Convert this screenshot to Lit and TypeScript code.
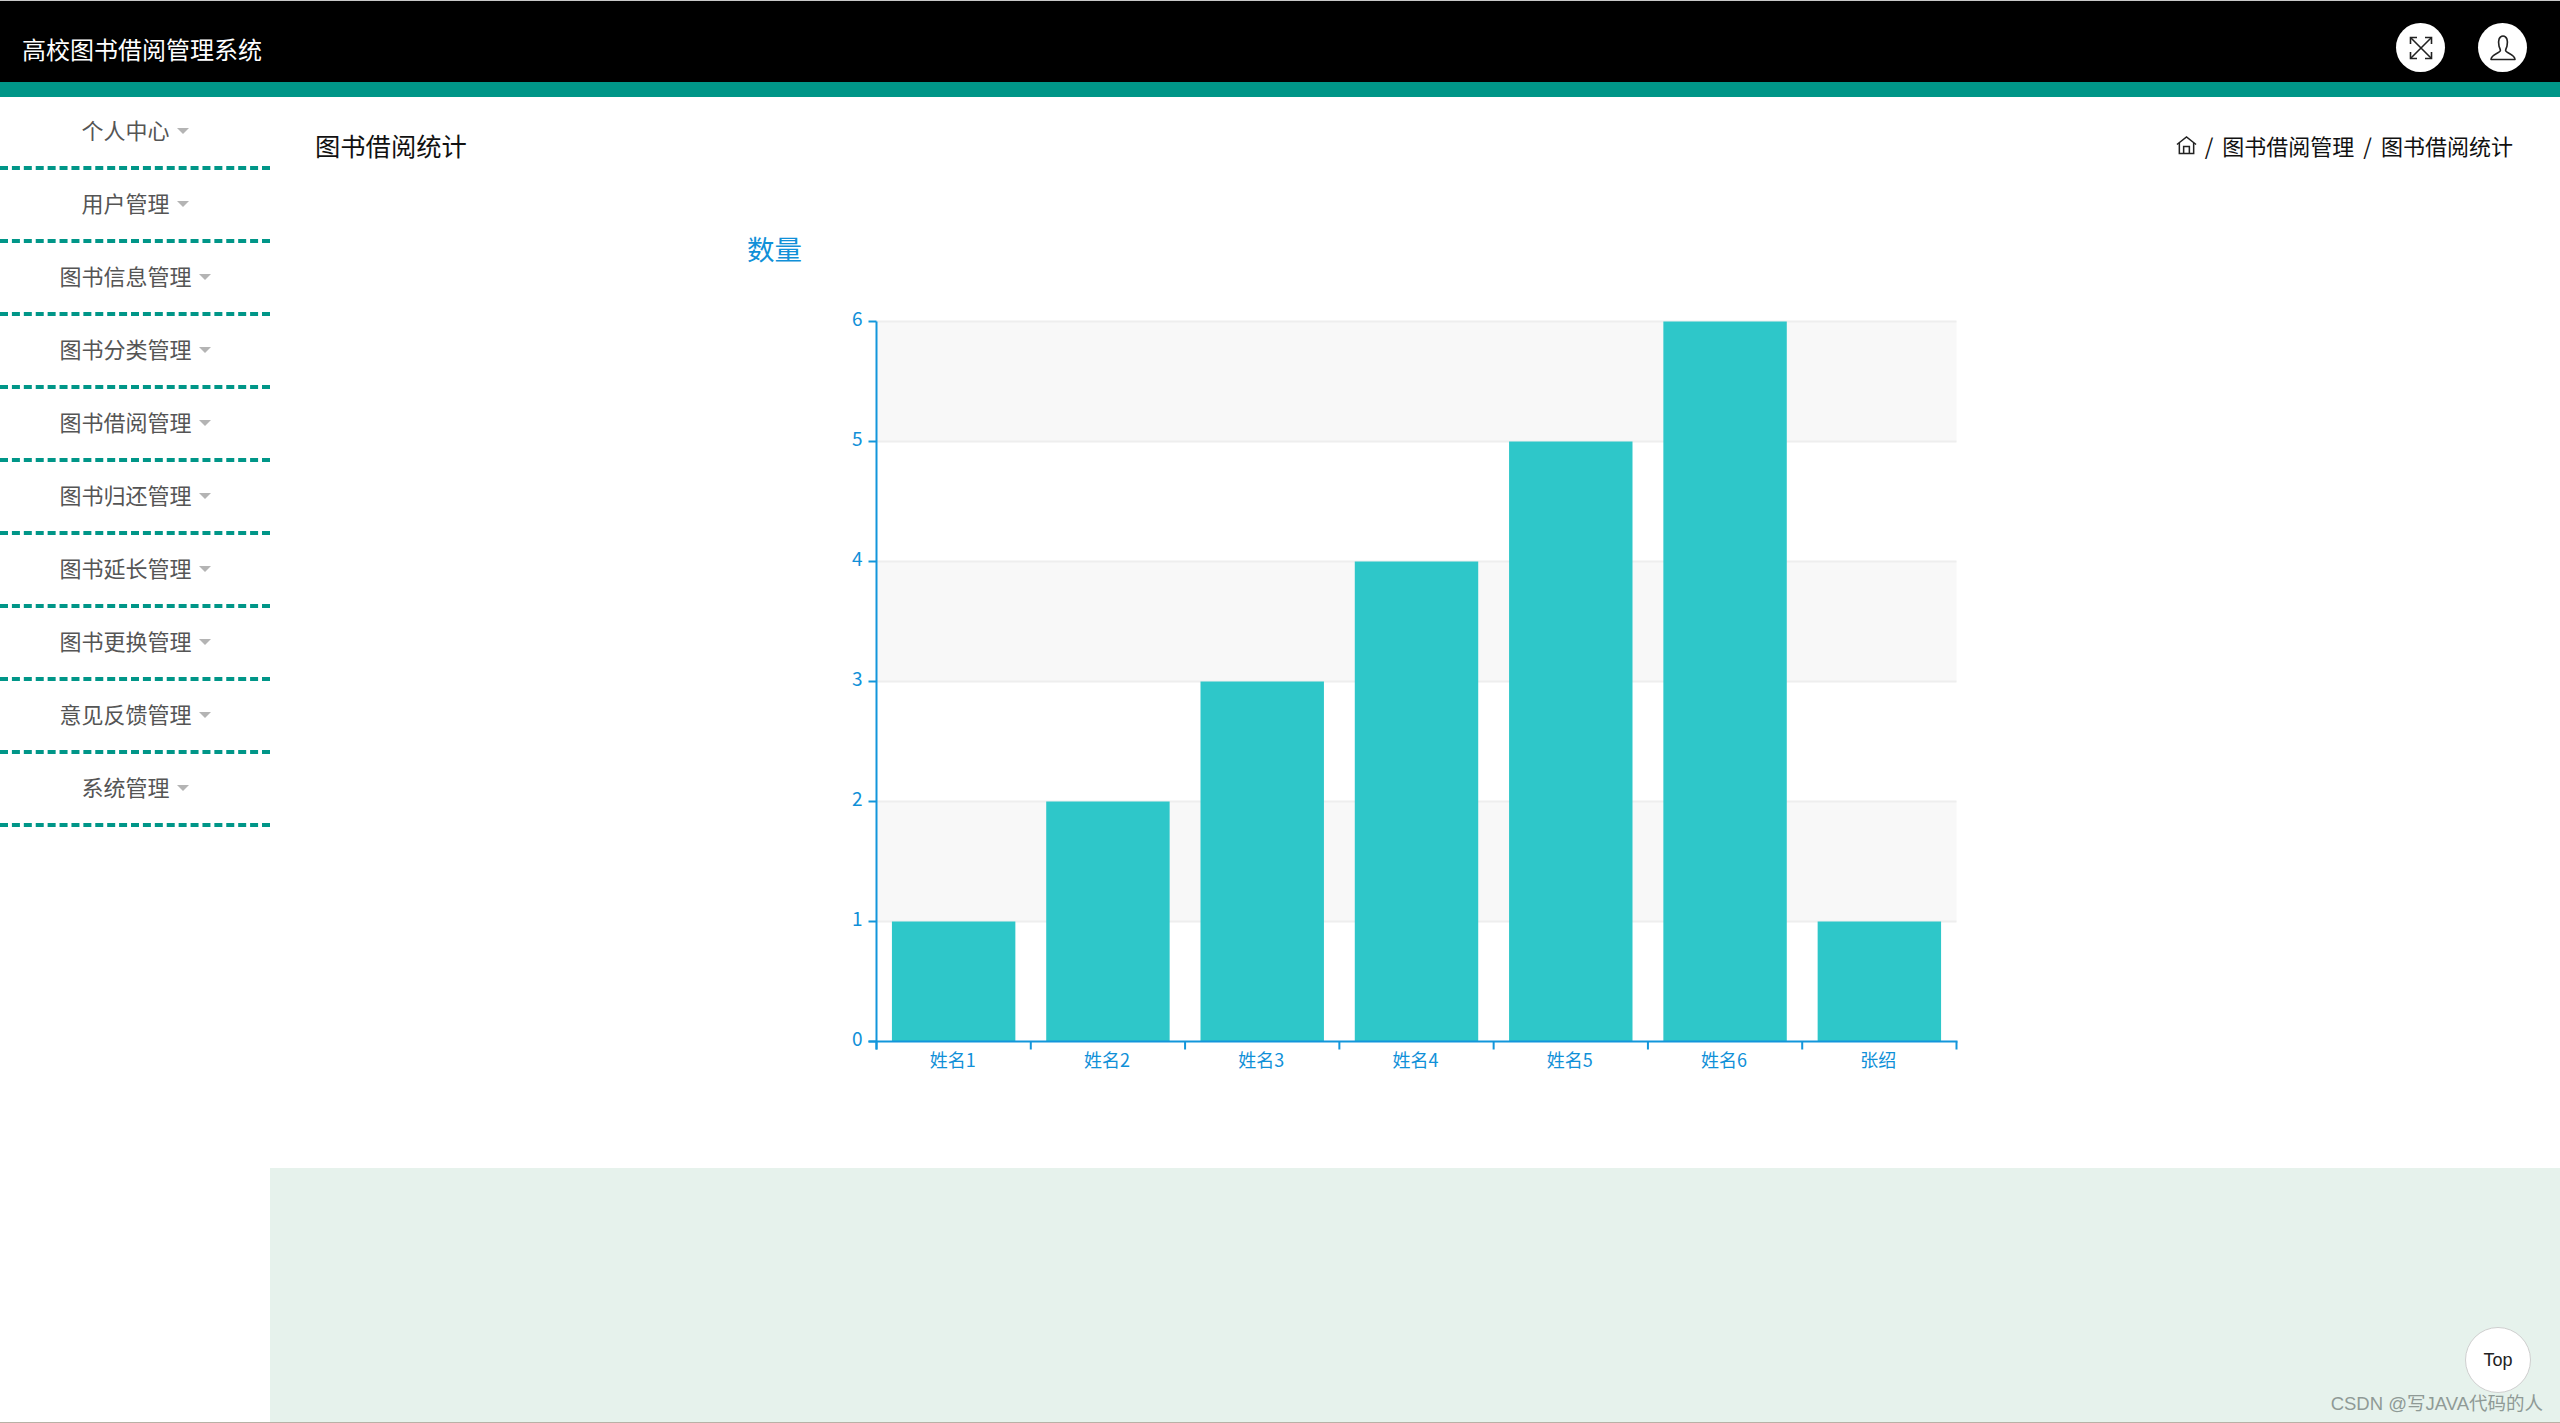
import { LitElement, html, css, svg } from "lit";
import { customElement } from "lit/decorators.js";

const MENU = ["个人中心", "用户管理", "图书信息管理", "图书分类管理", "图书借阅管理", "图书归还管理", "图书延长管理", "图书更换管理", "意见反馈管理", "系统管理"];
const DATA: [string, number][] = [["姓名1", 1], ["姓名2", 2], ["姓名3", 3], ["姓名4", 4], ["姓名5", 5], ["姓名6", 6], ["张绍", 1]];

const LEFT = 606.5, PLOT_W = 1080, UNIT = 120, BASE = 877.5;
const AXIS = "#1296db";

@customElement("app-root")
export class AppRoot extends LitElement {
  static styles = css`
    :host {
      display: block;
      position: relative;
      height: 1423px;
      width: 2560px;
      overflow: hidden;
      background: #fff;
      font-family: "Noto Sans CJK SC", "Liberation Sans", sans-serif;
    }
    .page { display: flex; flex-direction: column; height: 100%; border-bottom: 1px solid #b8b1a6; box-sizing: border-box; }
    .topbar {
      flex: none; height: 97px; box-sizing: border-box;
      background: #000; border-top: 1px solid #c8c8c8; border-bottom: 15px solid #009688;
      display: flex; align-items: center; justify-content: space-between;
      padding: 0 33px 0 22px;
    }
    .brand { color: #fff; font-size: 24px; line-height: 32px; margin-top: 15px; }
    .actions { display: flex; gap: 33px; align-items: center; margin-top: 12px; }
    .round { width: 49px; height: 49px; border-radius: 50%; background: #fff; display: flex; align-items: center; justify-content: center; }
    .round svg { display: block; }
    .body { flex: 1; display: flex; min-height: 0; }
    .side { flex: none; width: 270px; }
    .item {
      height: 73px; box-sizing: border-box; border-bottom: 4px dashed #009688;
      display: flex; align-items: center; justify-content: center; gap: 7px;
      padding-bottom: 5px; color: #555; font-size: 22px; line-height: 30px;
    }
    .caret { width: 0; height: 0; border-left: 6px solid transparent; border-right: 6px solid transparent; border-top: 6px solid #b4b4b4; margin-top: 3px; }
    .main { flex: 1; display: flex; flex-direction: column; min-width: 0; }
    .content { height: 1071px; flex: none; }
    .crumbs { display: flex; justify-content: space-between; align-items: center; height: 36px; padding: 30px 47px 1px 45px; }
    .crumbs h1 { margin: 0; font-weight: 400; font-size: 25.3px; line-height: 36px; color: #111; }
    .path { display: flex; align-items: center; font-size: 22px; line-height: 30px; color: #111; margin-top: -1px; }
    .path svg { display: block; margin-right: -1px; }
    .sep { margin: 0 9px; }
    .chart { display: block; }
    .chart text { font-family: "Noto Sans CJK SC", "Open Sans", sans-serif; fill: #1090d8; }
    .footer { flex: 1; background: #e6f2ec; }
    .top {
      position: absolute; left: 2465px; top: 1327px; width: 66px; height: 66px; box-sizing: border-box;
      border-radius: 50%; background: #fff; border: 1px solid #cfcfcf;
      display: flex; align-items: center; justify-content: center;
      color: #222; font-size: 18px; padding-top: 1px; font-family: "Liberation Sans", sans-serif;
    }
    .mark {
      position: absolute; right: 17px; top: 1391px; line-height: 26px; font-size: 18.5px; color: #8f9a96;
      font-family: "Liberation Sans", "Noto Sans CJK SC", sans-serif;
    }
  `;

  private chart() {
    const cat = PLOT_W / DATA.length;
    const bw = cat * 0.8;
    return html`<svg class="chart" width="2290" height="1004" viewBox="0 0 2290 1004">
      ${[0, 2, 4].map((i) => svg`<rect x="${LEFT}" y="${BASE - UNIT * (6 - i)}" width="${PLOT_W}" height="${UNIT}" fill="#f8f8f8"></rect>`)}
      ${[1, 2, 3, 4, 5, 6].map((v) => svg`<line x1="${LEFT}" x2="${LEFT + PLOT_W}" y1="${BASE - UNIT * v}" y2="${BASE - UNIT * v}" stroke="#eee" stroke-width="2"></line>`)}
      ${DATA.map(([name, v], i) => svg`
        <rect x="${LEFT + cat * i + cat * 0.1}" y="${BASE - UNIT * v}" width="${bw}" height="${UNIT * v}" fill="#2ec7c9"></rect>
        <text x="${LEFT + cat * (i + 0.5) - 1}" y="${BASE + 25}" font-size="18" text-anchor="middle">${name}</text>
        <line x1="${LEFT + cat * i}" x2="${LEFT + cat * i}" y1="${BASE}" y2="${BASE + 8}" stroke="${AXIS}" stroke-width="2"></line>`)}
      <line x1="${LEFT + PLOT_W}" x2="${LEFT + PLOT_W}" y1="${BASE}" y2="${BASE + 8}" stroke="${AXIS}" stroke-width="2"></line>
      ${[0, 1, 2, 3, 4, 5, 6].map((v) => svg`
        <line x1="${LEFT - 8}" x2="${LEFT}" y1="${BASE - UNIT * v}" y2="${BASE - UNIT * v}" stroke="${AXIS}" stroke-width="2"></line>
        <text x="${LEFT - 14}" y="${BASE - UNIT * v + 4}" font-size="19" text-anchor="end">${v}</text>`)}
      <line x1="${LEFT}" x2="${LEFT}" y1="${BASE - UNIT * 6}" y2="${BASE + 8}" stroke="${AXIS}" stroke-width="2"></line>
      <line x1="${LEFT - 8}" x2="${LEFT + PLOT_W + 1}" y1="${BASE}" y2="${BASE}" stroke="${AXIS}" stroke-width="2"></line>
      <text x="477" y="96" font-size="27.5">数量</text>
    </svg>`;
  }

  render() {
    return html`
      <div class="page">
        <header class="topbar">
          <div class="brand">高校图书借阅管理系统</div>
          <div class="actions">
            <div class="round">
              <svg width="24" height="24" viewBox="0 0 24 24" fill="none" stroke="#222" stroke-width="1.6">
                <path d="M2 2 L22 22 M22 2 L2 22"></path>
                <path d="M1.5 8 V1.5 H8 M16 1.5 H22.5 V8 M22.5 16 V22.5 H16 M8 22.5 H1.5 V16"></path>
              </svg>
            </div>
            <div class="round">
              <svg width="26" height="26" viewBox="0 0 26 26" fill="none" stroke="#222" stroke-width="1.6" stroke-linejoin="round">
                <path d="M9 11 C7.8 6 9 1 13 1 C17 1 18.2 6 17 11 C16.5 13 15.6 14 15.6 15.5 C15.6 18 25 19 25 24.5 H1 C1 19 10.4 18 10.4 15.5 C10.4 14 9.5 13 9 11 Z"></path>
              </svg>
            </div>
          </div>
        </header>
        <div class="body">
          <nav class="side">
            ${MENU.map((m) => html`<div class="item"><span>${m}</span><i class="caret"></i></div>`)}
          </nav>
          <main class="main">
            <section class="content">
              <div class="crumbs">
                <h1>图书借阅统计</h1>
                <div class="path">
                  <svg width="21" height="20" viewBox="0 0 22 20" fill="none" stroke="#222" stroke-width="1.6">
                    <path d="M1 9.5 L11 1.5 L21 9.5"></path>
                    <path d="M3.5 8 V19 H18.5 V8"></path>
                    <path d="M8 19 V11.5 H14 V19"></path>
                  </svg>
                  <span class="sep">/</span><span>图书借阅管理</span><span class="sep">/</span><span>图书借阅统计</span>
                </div>
              </div>
              ${this.chart()}
            </section>
            <div class="footer"></div>
          </main>
        </div>
      </div>
      <div class="top">Top</div>
      <div class="mark">CSDN @写JAVA代码的人</div>
    `;
  }
}
